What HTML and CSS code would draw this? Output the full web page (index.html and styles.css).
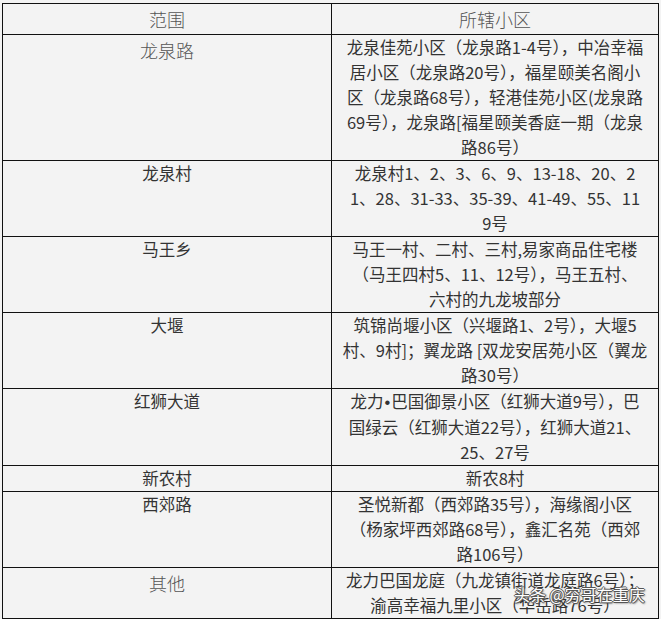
FILE: index.html
```html
<!DOCTYPE html>
<html lang="zh">
<head>
<meta charset="utf-8">
<title>范围 所辖小区</title>
<link rel="stylesheet" href="styles.css">
</head>
<body>
<div class="page">
<table class="grid">
  <colgroup><col class="c-area"><col class="c-list"></colgroup>
  <thead>
    <tr><th class="serif">范围</th><th class="serif">所辖小区</th></tr>
  </thead>
  <tbody>
    <tr><td class="serif">龙泉路</td><td>龙泉佳苑小区（龙泉路1-4号），中冶幸福<br>居小区（龙泉路20号），福星颐美名阁小<br>区（龙泉路68号），轻港佳苑小区(龙泉路<br>69号），龙泉路[福星颐美香庭一期（龙泉<br>路86号）</td></tr>
    <tr><td>龙泉村</td><td>龙泉村1、2、3、6、9、13-18、20、2<br>1、28、31-33、35-39、41-49、55、11<br>9号</td></tr>
    <tr><td>马王乡</td><td>马王一村、二村、三村,易家商品住宅楼<br>（马王四村5、11、12号），马王五村、<br>六村的九龙坡部分</td></tr>
    <tr><td>大堰</td><td>筑锦尚堰小区（兴堰路1、2号），大堰5<br>村、9村]；翼龙路 [双龙安居苑小区（翼龙<br>路30号）</td></tr>
    <tr><td>红狮大道</td><td>龙力<span class="dot">•</span>巴国御景小区（红狮大道9号），巴<br>国绿云（红狮大道22号），红狮大道21、<br>25、27号</td></tr>
    <tr><td>新农村</td><td>新农8村</td></tr>
    <tr><td>西郊路</td><td>圣悦新都（西郊路35号），海缘阁小区<br>（杨家坪西郊路68号），鑫汇名苑（西郊<br>路106号）</td></tr>
    <tr><td class="serif">其他</td><td>龙力巴国龙庭（九龙镇街道龙庭路6号）；<br>渝高幸福九里小区（华岳路76号）</td></tr>
  </tbody>
</table>
<span class="mark">头条 @穷哥在重庆</span>
</div>
</body>
</html>
```
FILE: styles.css
```css
html, body {
  margin: 0;
  padding: 0;
  background: #f3f3f3;
}
.page {
  position: relative;
  width: 661px;
  height: 619px;
  overflow: hidden;
  padding: 3px 0 0 2px;
  box-sizing: border-box;
}
.grid {
  border-collapse: collapse;
  table-layout: fixed;
  width: 656px;
  font-family: "Noto Sans CJK SC", "Microsoft YaHei", sans-serif;
  font-size: 16.5px;
  color: #333;
}
.c-area { width: 329px; }
.c-list { width: 327px; }
.grid th, .grid td {
  border: 1px solid #111;
  padding: 0;
  text-align: center;
  vertical-align: top;
  white-space: nowrap;
  line-height: 25px;
}
.grid th {
  line-height: 30px;
  font-weight: 300;
}
.serif {
  font-size: 18px;
  font-weight: 300;
  color: #555;
}
.grid td.serif { line-height: 30px; }
.dot {
  font-family: "Liberation Sans", sans-serif;
  padding: 0 1px;
}
.mark {
  position: absolute;
  left: 514px;
  top: 584px;
  font-family: "Noto Sans CJK SC", sans-serif;
  font-size: 16px;
  line-height: 20px;
  color: #fff;
  text-shadow: -1px 0 #555, 1px 0 #555, 0 -1px #555, 0 1px #555, 1px 1px 2px #333;
}
```
